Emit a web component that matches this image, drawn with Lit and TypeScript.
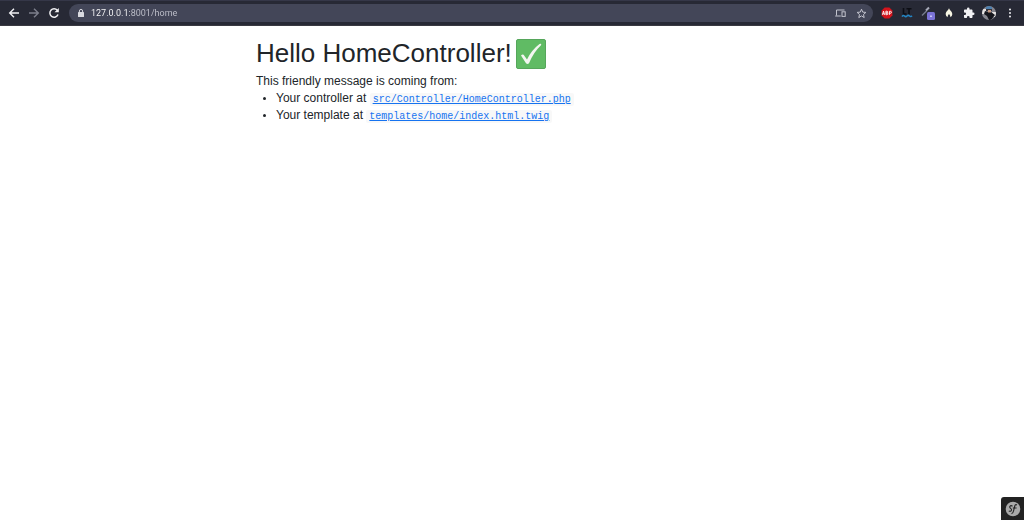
import { LitElement, html, css } from "lit";
import { customElement, property } from "lit/decorators.js";

@customElement("browser-bar")
class BrowserBar extends LitElement {
  @property() address = "";

  static styles = css`
    :host { display: block; }
    * { box-sizing: border-box; }
    .bar {
      display: flex;
      align-items: center;
      height: 26px;
      padding: 0 6px 0 8px;
      background: #272935;
      border-top: 1px solid #353748;
      border-bottom: 1px solid #3a3a42;
    }
    button {
      display: grid;
      place-items: center;
      padding: 0;
      border: 0;
      background: none;
      color: #f1f1f4;
      font: inherit;
    }
    svg { display: block; }
    .nav { display: flex; gap: 8px; margin-right: 9px; }
    .nav button { width: 12px; height: 12px; }
    .nav .dim { color: #7c7e8b; }
    .field {
      flex: 1;
      display: flex;
      align-items: center;
      height: 18px;
      padding: 0 6px 0 8px;
      border-radius: 9px;
      background: #434658;
      color: #d9dae0;
    }
    input {
      flex: 1;
      min-width: 0;
      height: 18px;
      margin-left: 6px;
      padding: 0;
      border: 0;
      outline: 0;
      font: 9px/18px Roboto, sans-serif;
      color: transparent;
      background: linear-gradient(to right, #fff 39px, #c2c4ce 39px);
      background-clip: text;
      -webkit-background-clip: text;
    }
    .inside { display: flex; gap: 10px; }
    .inside button { width: 11px; height: 12px; color: #c3c4ce; }
    .tools { display: flex; align-items: center; gap: 6px; margin-left: 7px; }
    .tools button { width: 14px; height: 16px; }
    .tools .wide { width: 16px; }
  `;

  render() {
    return html`
      <header class="bar">
        <nav class="nav">
          <button aria-label="Back">
            <svg width="12" height="12" viewBox="0 0 12 12" fill="none" stroke="currentColor" stroke-width="1.4"><path d="M11 6H2M6 1.7 1.7 6 6 10.3" /></svg>
          </button>
          <button class="dim" aria-label="Forward">
            <svg width="12" height="12" viewBox="0 0 12 12" fill="none" stroke="currentColor" stroke-width="1.4"><path d="M1 6h9M6 1.7 10.3 6 6 10.3" /></svg>
          </button>
          <button aria-label="Reload">
            <svg width="12" height="12" viewBox="0 0 12 12"><path d="M9.3 3.3A4.2 4.2 0 1 0 10 7.5" fill="none" stroke="currentColor" stroke-width="1.5" /><path d="M10.8 1v4.3H6.5z" fill="currentColor" /></svg>
          </button>
        </nav>
        <div class="field">
          <svg width="8" height="10" viewBox="0 0 8 10"><rect x="1" y="4" width="6" height="5" rx=".6" fill="currentColor" /><path d="M2.4 4.4V3a1.6 1.6 0 0 1 3.2 0v1.4" fill="none" stroke="currentColor" /></svg>
          <input aria-label="Address" .value=${this.address} />
          <div class="inside">
            <button aria-label="Send to device">
              <svg width="11" height="10" viewBox="0 0 11 10" fill="none" stroke="currentColor"><path d="M9.5 2h-8v5.5M.2 8h5.6" /><rect x="7" y="3.8" width="3.2" height="4.6" /></svg>
            </button>
            <button aria-label="Bookmark">
              <svg width="11" height="11" viewBox="0 0 11 11" fill="none" stroke="currentColor"><path d="m5.5 1.2 1.2 2.9 3.2.3-2.4 2.1.7 3.1-2.7-1.7-2.7 1.7.7-3.1-2.4-2.1 3.2-.3z" /></svg>
            </button>
          </div>
        </div>
        <div class="tools">
          <button aria-label="Adblock Plus">
            <svg width="12" height="12" viewBox="0 0 12 12"><path d="M3.6.6h4.8l3 3v4.8l-3 3H3.6l-3-3V3.6z" fill="#d4141c" /><path d="m1.400 7.800 1.100-3.600 1.100 3.600M1.900 6.800h1.300M4.900 4.200v3.500h1q1-.1 1-.9T6 6H5h.9q.8-.1.8-.9t-.8-.9zM8.400 7.900V4.300h1a1 1 0 0 1 0 2h-1" fill="none" stroke="#fff" stroke-width=".9" /></svg>
          </button>
          <button aria-label="LanguageTool">
            <svg width="12" height="12" viewBox="0 0 12 12" fill="none"><path d="M2.500 1v6H5.500M5.500 1.700h5M8 1.700v5.500" stroke="#0d0e14" stroke-width="1.600" /><path d="M1 9.700q1.200-1.900 2.500-.7t2.500 0 2.500 0 2.500-.3" stroke="#2385c4" stroke-width="1.500" /></svg>
          </button>
          <button class="wide" aria-label="Color picker">
            <svg width="14" height="14" viewBox="0 0 14 14"><path d="M1 9.500 5.500 5" stroke="#777b8e" stroke-width="1.400" /><path d="m5 4.500 3-3" stroke="#a7aab8" stroke-width="2" /><rect x="6" y="6" width="8" height="8" rx="1.500" fill="#7b73d6" /><rect x="9" y="9.500" width="2" height="1.500" fill="#c9c5f7" /></svg>
          </button>
          <button aria-label="Flame">
            <svg width="10" height="12" viewBox="0 0 10 12"><path d="M5 1c.3 2 3.300 3.500 3.300 6.200A3.300 3.300 0 0 1 6.300 10.200c.2-1.500-.5-2.200-1.300-3.200-.8 1-1.500 1.700-1.300 3.200A3.300 3.300 0 0 1 1.700 7.200C1.700 4.500 4.700 3 5 1z" fill="#f7f6e4" /></svg>
          </button>
          <button aria-label="Extensions">
            <svg width="12" height="12" viewBox="0 0 24 24"><path fill="currentColor" d="M20.500 11H19V7c0-1.100-.9-2-2-2h-4V3.500a2.500 2.500 0 0 0-5 0V5H4c-1.100 0-2 .9-2 2v3.800h1.500a2.700 2.700 0 0 1 0 5.400H2V20c0 1.100.9 2 2 2h3.800v-1.500a2.700 2.700 0 0 1 5.400 0V22H17c1.100 0 2-.9 2-2v-4h1.500a2.500 2.500 0 0 0 0-5z" /></svg>
          </button>
          <button aria-label="Profile">
            <svg width="14" height="14" viewBox="0 0 14 14"><defs><clipPath id="disc"><circle cx="7" cy="7" r="7" /></clipPath></defs><g clip-path="url(#disc)"><path fill="#85858e" d="M0 0h14v14H0z" /><path fill="#e4e2e2" d="M0 3h4v5H0zM10 6h4v5h-3z" /><path fill="#15161d" d="M3 5l3 1h3l4 3-4 5H7L5 10 2 8z" /><path fill="#4d7fae" d="M4 1q3-2 6 0v2H4z" /><path fill="#33343d" d="M4 3h6v2H4z" /><path fill="#c79c86" d="M6 4h3v2.500H6z" /></g></svg>
          </button>
          <button class="wide" aria-label="Menu">
            <svg width="4" height="12" viewBox="0 0 4 12" fill="currentColor"><circle cx="2" cy="2.500" r="1" /><circle cx="2" cy="6" r="1" /><circle cx="2" cy="9.500" r="1" /></svg>
          </button>
        </div>
      </header>
    `;
  }
}

@customElement("app-root")
class AppRoot extends LitElement {
  static styles = css`
    :host {
      display: flex;
      flex-direction: column;
      min-height: 100vh;
      background: #fff;
      color: #212529;
      font: 12px/17px "Liberation Sans", Arial, sans-serif;
    }
    main { width: 50%; margin: 0 auto; padding-top: 12px; flex: 1; }
    h1 {
      display: flex;
      align-items: center;
      gap: 4px;
      margin: 0 0 4px;
      font-size: 26px;
      line-height: 31px;
      font-weight: 400;
    }
    p { margin: 0; }
    ul { margin: 0; padding-left: 20px; }
    li::marker { font-size: 10px; }
    code {
      padding: 1px 3px;
      border-radius: 2px;
      background: #f8f8f8;
      font: 10px/12px "Liberation Mono", monospace;
    }
    a { color: #1673f0; }
    footer { display: flex; justify-content: flex-end; }
    .debug {
      display: grid;
      place-items: center;
      width: 23px;
      height: 23px;
      padding: 0;
      border: 0;
      border-top-left-radius: 3px;
      background: #222;
    }
  `;

  private files = [
    ["controller", "src/Controller/HomeController.php"],
    ["template", "templates/home/index.html.twig"],
  ];

  render() {
    return html`
      <browser-bar address="127.0.0.1:8001/home"></browser-bar>
      <main>
        <h1>
          <span>Hello HomeController!</span>
          <svg width="30" height="30" viewBox="0 0 30 30" role="img" aria-label="Check mark">
            <rect x=".5" y=".5" width="29" height="29" rx="1.500" fill="#60bb64" stroke="#56a65b" />
            <path d="M5 16.500Q7 14.500 8.500 17L11 20.500Q15.500 11 23.500 5q2.500-.7 1.500 1.300-7.500 7-12 18-1.500 1.500-3 0z" fill="#f3f6f1" />
          </svg>
        </h1>
        <p>This friendly message is coming from:</p>
        <ul>
          ${this.files.map(
            ([kind, path]) => html`<li>Your ${kind} at <code><a href="#">${path}</a></code></li>`
          )}
        </ul>
      </main>
      <footer>
        <button class="debug" aria-label="Open Symfony toolbar">
          <svg width="16" height="16" viewBox="0 0 16 16"><circle cx="8" cy="8" r="7.300" fill="#aaa" /><path d="M7.500 5.200Q5.700 3.800 4.800 5.600C4.200 7.300 7 7.500 6.500 9.200Q5.500 11 3.800 9.900M6.500 12.700Q8 12.500 8.500 10L9.800 5Q10.300 3 12 4M7.800 7h3.800" fill="none" stroke="#222" stroke-width="1.100" /></svg>
        </button>
      </footer>
    `;
  }
}
